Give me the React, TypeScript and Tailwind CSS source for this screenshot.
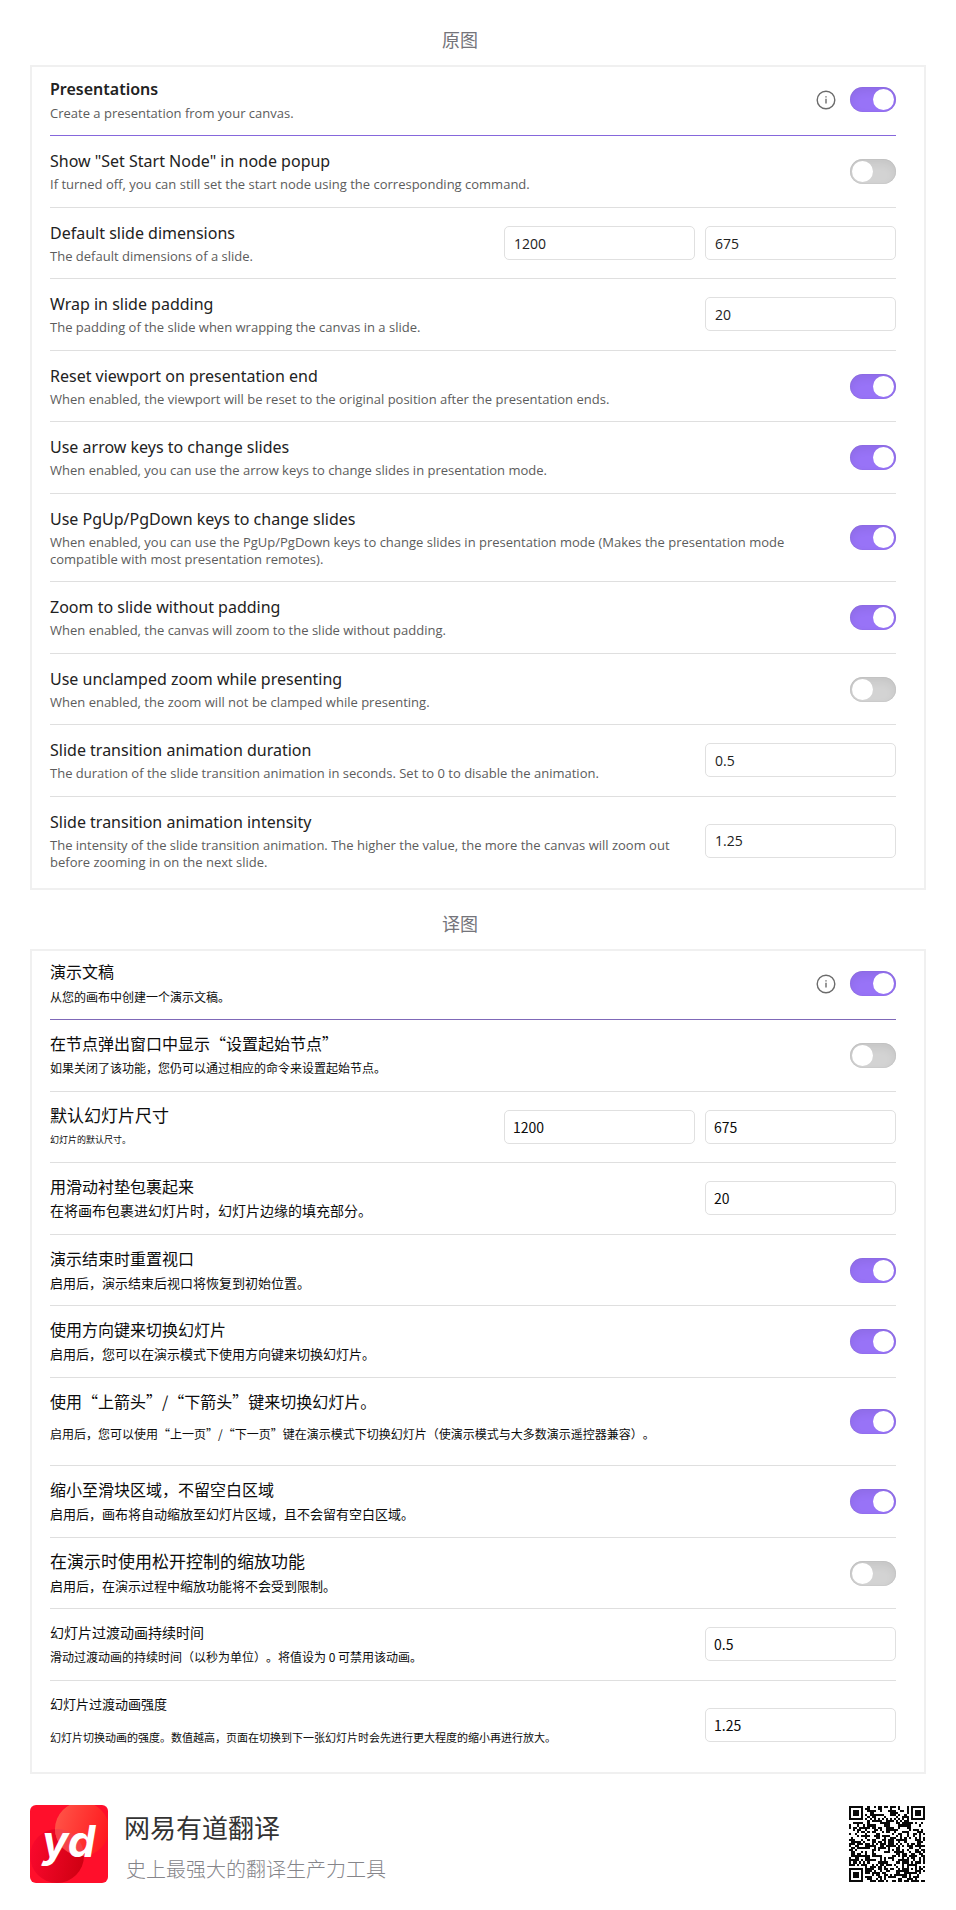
import React, { useId, useState } from 'react';

type Locale = 'en' | 'zh';

interface Setting {
  title: string;
  desc: string;
  toggle?: boolean;
  values?: string[];
  tall?: boolean;
  titleSize?: string;
  descSize?: string;
}

const english: Setting[] = [
  {
    title: 'Show "Set Start Node" in node popup',
    desc: 'If turned off, you can still set the start node using the corresponding command.',
    toggle: false,
  },
  { title: 'Default slide dimensions', desc: 'The default dimensions of a slide.', values: ['1200', '675'] },
  {
    title: 'Wrap in slide padding',
    desc: 'The padding of the slide when wrapping the canvas in a slide.',
    values: ['20'],
  },
  {
    title: 'Reset viewport on presentation end',
    desc: 'When enabled, the viewport will be reset to the original position after the presentation ends.',
    toggle: true,
  },
  {
    title: 'Use arrow keys to change slides',
    desc: 'When enabled, you can use the arrow keys to change slides in presentation mode.',
    toggle: true,
  },
  {
    title: 'Use PgUp/PgDown keys to change slides',
    desc: 'When enabled, you can use the PgUp/PgDown keys to change slides in presentation mode (Makes the presentation mode compatible with most presentation remotes).',
    toggle: true,
  },
  {
    title: 'Zoom to slide without padding',
    desc: 'When enabled, the canvas will zoom to the slide without padding.',
    toggle: true,
  },
  {
    title: 'Use unclamped zoom while presenting',
    desc: 'When enabled, the zoom will not be clamped while presenting.',
    toggle: false,
  },
  {
    title: 'Slide transition animation duration',
    desc: 'The duration of the slide transition animation in seconds. Set to 0 to disable the animation.',
    values: ['0.5'],
  },
  {
    title: 'Slide transition animation intensity',
    desc: 'The intensity of the slide transition animation. The higher the value, the more the canvas will zoom out before zooming in on the next slide.',
    values: ['1.25'],
  },
];

const chinese: Setting[] = [
  {
    title: '在节点弹出窗口中显示“设置起始节点”',
    desc: '如果关闭了该功能，您仍可以通过相应的命令来设置起始节点。',
    toggle: false,
  },
  {
    title: '默认幻灯片尺寸',
    desc: '幻灯片的默认尺寸。',
    values: ['1200', '675'],
    titleSize: 'text-[17px]',
    descSize: 'text-[9px]',
  },
  {
    title: '用滑动衬垫包裹起来',
    desc: '在将画布包裹进幻灯片时，幻灯片边缘的填充部分。',
    values: ['20'],
    descSize: 'text-[14px]',
  },
  {
    title: '演示结束时重置视口',
    desc: '启用后，演示结束后视口将恢复到初始位置。',
    toggle: true,
    descSize: 'text-[13px]',
  },
  {
    title: '使用方向键来切换幻灯片',
    desc: '启用后，您可以在演示模式下使用方向键来切换幻灯片。',
    toggle: true,
    descSize: 'text-[13px]',
  },
  {
    title: '使用“上箭头”/“下箭头”键来切换幻灯片。',
    desc: '启用后，您可以使用“上一页”/“下一页”键在演示模式下切换幻灯片（使演示模式与大多数演示遥控器兼容）。',
    toggle: true,
    tall: true,
  },
  {
    title: '缩小至滑块区域，不留空白区域',
    desc: '启用后，画布将自动缩放至幻灯片区域，且不会留有空白区域。',
    toggle: true,
    descSize: 'text-[13px]',
  },
  {
    title: '在演示时使用松开控制的缩放功能',
    desc: '启用后，在演示过程中缩放功能将不会受到限制。',
    toggle: false,
    titleSize: 'text-[17px]',
    descSize: 'text-[13px]',
  },
  {
    title: '幻灯片过渡动画持续时间',
    desc: '滑动过渡动画的持续时间（以秒为单位）。将值设为 0 可禁用该动画。',
    values: ['0.5'],
    titleSize: 'text-[14px]',
  },
  {
    title: '幻灯片过渡动画强度',
    desc: '幻灯片切换动画的强度。数值越高，页面在切换到下一张幻灯片时会先进行更大程度的缩小再进行放大。',
    values: ['1.25'],
    tall: true,
    titleSize: 'text-[13px]',
    descSize: 'text-[11px]',
  },
];

const cjk = "font-['Noto_Sans_CJK_SC',sans-serif]";

function Toggle({ id, initial }: { id: string; initial: boolean }) {
  const [on, setOn] = useState(initial);
  return (
    <input
      id={id}
      type="checkbox"
      role="switch"
      checked={on}
      onChange={(e) => setOn(e.target.checked)}
      className="h-[25px] w-[46px] shrink-0 cursor-pointer appearance-none rounded-full bg-[#d3d3d3] p-[2px] shadow-[inset_0_4px_10px_rgba(0,0,0,0.07),inset_0_0_1px_rgba(0,0,0,0.21)] before:block before:size-[21px] before:rounded-full before:bg-white before:content-[''] checked:bg-[#9873f7] checked:before:ml-[21px]"
    />
  );
}

function InfoIcon() {
  return (
    <svg viewBox="0 0 20 20" className="size-5" fill="none" stroke="#6b6b6b" aria-hidden="true">
      <circle cx="10" cy="10" r="8.8" strokeWidth="1.4" />
      <path d="M10 8.8V13.6" strokeWidth="1.4" />
      <path d="M10 6.2V7.6" strokeWidth="1.4" />
    </svg>
  );
}

function SettingRow({ item, locale }: { item: Setting; locale: Locale }) {
  const id = useId();
  const zh = locale === 'zh';
  const titleClass = zh ? `${item.titleSize ?? 'text-[16px]'} text-[#0c0c0c]` : "text-[16px] font-['Noto_Sans',sans-serif] text-[#222]";
  const descClass = zh
    ? `mt-[5px] ${item.descSize ?? 'text-[12px]'} text-[#0c0c0c] ${item.tall ? 'leading-[34px]' : 'leading-[17px]'}`
    : 'mt-1 text-[13px] leading-[17px] text-[#5c5c5c]';
  return (
    <div className="flex items-center gap-4 border-b border-[#dfdfdf] last:border-b-0 odd:pb-px">
      <div className={`min-w-0 flex-1 ${zh ? 'pt-3 pb-[14px]' : 'pt-[14px] pb-[13px]'}`}>
        <label htmlFor={`${id}-0`} className={`block leading-[22px] ${titleClass}`}>
          {item.title}
        </label>
        <p className={descClass}>{item.desc}</p>
      </div>
      {item.values ? (
        <div className="flex shrink-0 gap-[10px]">
          {item.values.map((v, i) => (
            <input
              key={i}
              id={`${id}-${i}`}
              type="text"
              inputMode="decimal"
              defaultValue={v}
              aria-label={item.title}
              className={`h-[34px] w-[191px] rounded-[5px] border border-[#e0e0e0] bg-white text-[14px] ${zh ? 'px-[8px] text-[#0c0c0c]' : 'px-[9px] text-[#222]'}`}
            />
          ))}
        </div>
      ) : (
        <Toggle id={`${id}-0`} initial={!!item.toggle} />
      )}
    </div>
  );
}

function Panel({ locale, title, desc, items }: { locale: Locale; title: string; desc: string; items: Setting[] }) {
  const id = useId();
  const zh = locale === 'zh';
  return (
    <section
      lang={zh ? 'zh-CN' : 'en'}
      className={`mx-[30px] border-2 border-[#f0f0f0] pr-7 pb-1 pl-[18px] ${zh ? "font-['Noto_Sans_CJK_SC',sans-serif] [text-spacing-trim:space-all]" : "font-['Open_Sans',sans-serif]"}`}
    >
      <div className={`flex items-center border-b pb-[3px] ${zh ? 'border-[#7f69b8]' : 'border-[#8667dc]'}`}>
        <div className={`flex-1 ${zh ? 'pt-[9px] pb-[11px]' : 'pt-[11px] pb-[10px]'}`}>
          <label
            htmlFor={id}
            className={`block text-[16px] leading-[22px] ${zh ? 'text-[#0c0c0c]' : "font-['Noto_Sans',sans-serif] font-semibold text-[#222]"}`}
          >
            {title}
          </label>
          <p className={`leading-[17px] ${zh ? 'mt-[6px] text-[12px] text-[#0c0c0c]' : 'mt-[5px] text-[13px] text-[#5c5c5c]'}`}>
            {desc}
          </p>
        </div>
        <button type="button" aria-label={title} className="mr-[14px] cursor-pointer">
          <InfoIcon />
        </button>
        <Toggle id={id} initial />
      </div>
      <div>
        {items.map((item) => (
          <SettingRow key={item.title} item={item} locale={locale} />
        ))}
      </div>
    </section>
  );
}

function Caption({ children }: { children: string }) {
  return (
    <h2 className={`pt-5 pr-9 pb-[13px] text-center text-[18px] leading-[26px] font-normal text-[#74747a] ${cjk}`}>
      {children}
    </h2>
  );
}

function Logo() {
  return (
    <svg viewBox="0 0 78 78" className="size-[78px] shrink-0" role="img" aria-label="yd">
      <defs>
        <clipPath id="tile">
          <rect width="78" height="78" rx="6" />
        </clipPath>
        <clipPath id="lower">
          <circle cx="27" cy="51" r="27" />
        </clipPath>
        <linearGradient id="warm" x1="0" y1="0.2" x2="1" y2="0.5">
          <stop offset="0" stopColor="#ff5548" />
          <stop offset="1" stopColor="#ff1a1f" />
        </linearGradient>
        <linearGradient id="dark" x1="0" y1="0.4" x2="1" y2="0.6">
          <stop offset="0" stopColor="#f9082c" />
          <stop offset="1" stopColor="#cf0012" />
        </linearGradient>
      </defs>
      <g clipPath="url(#tile)">
        <rect width="78" height="78" fill="#ff0f2b" />
        <circle cx="27" cy="51" r="27" fill="url(#dark)" />
        <circle cx="52" cy="24" r="27" fill="url(#warm)" />
        <g clipPath="url(#lower)">
          <circle cx="52" cy="24" r="27" fill="#f5434a" />
        </g>
      </g>
      <text x="12" y="52" fill="#fff" className="font-['Inter',sans-serif] text-[44px] font-bold italic">
        yd
      </text>
    </svg>
  );
}

const QR_SIZE = 37;

function isDark(x: number, y: number): boolean {
  const far = QR_SIZE - 7;
  for (const [fx, fy] of [[0, 0], [far, 0], [0, far]]) {
    const dx = x - fx;
    const dy = y - fy;
    if (dx >= -1 && dx <= 7 && dy >= -1 && dy <= 7) {
      const ring = Math.max(Math.abs(dx - 3), Math.abs(dy - 3));
      return ring === 3 || ring <= 1;
    }
  }
  const align = Math.max(Math.abs(x - 30), Math.abs(y - 30));
  if (align <= 2) return align !== 1;
  if (x === 6) return y % 2 === 0;
  if (y === 6) return x % 2 === 0;
  let h = Math.imul(x + 11, 374761393) + Math.imul(y + 7, 668265263);
  h = Math.imul(h ^ (h >>> 13), 1274126177);
  h ^= h >>> 16;
  return (h & 255) < 134;
}

function QrCode() {
  let d = '';
  for (let y = 0; y < QR_SIZE; y++) {
    for (let x = 0; x < QR_SIZE; x++) {
      if (isDark(x, y)) d += `M${x} ${y}h1v1h-1z`;
    }
  }
  return (
    <svg viewBox="0 0 37 37" className="mr-px size-[76px] shrink-0" shapeRendering="crispEdges" role="img" aria-label="QR">
      <path d={d} fill="#0a0a0a" />
    </svg>
  );
}

export default function App() {
  return (
    <main className="min-h-screen bg-white pt-[6px]">
      <Caption>原图</Caption>
      <Panel locale="en" title="Presentations" desc="Create a presentation from your canvas." items={english} />
      <Caption>译图</Caption>
      <Panel locale="zh" title="演示文稿" desc="从您的画布中创建一个演示文稿。" items={chinese} />
      <footer className={`flex items-center px-[30px] pt-[29px] pb-7 ${cjk}`}>
        <Logo />
        <div className="ml-4 flex-1 pt-[5px]">
          <p className="text-[26px] leading-[38px] text-[#333]">网易有道翻译</p>
          <p className="pt-2 pl-[2px] text-[20px] leading-[30px] font-light text-[#85858a]">史上最强大的翻译生产力工具</p>
        </div>
        <QrCode />
      </footer>
    </main>
  );
}
